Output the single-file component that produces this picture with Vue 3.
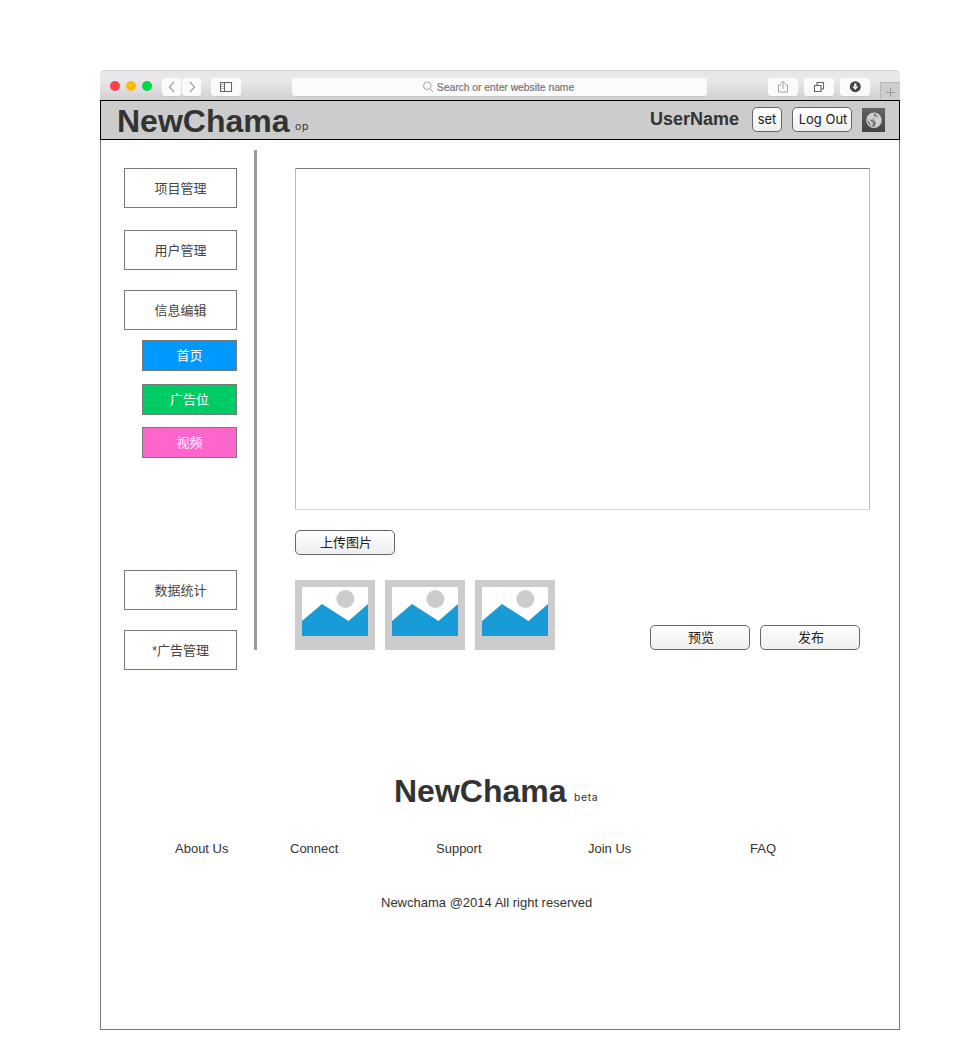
<script setup>
const mainNav = ['项目管理', '用户管理', '信息编辑']
const subNav = [
  { label: '首页', tone: 'blue' },
  { label: '广告位', tone: 'green' },
  { label: '视频', tone: 'pink' },
]
const lowerNav = ['数据统计', '*广告管理']
const footerLinks = ['About Us', 'Connect', 'Support', 'Join Us', 'FAQ']
</script>

<template>
  <div class="window">
    <div class="chrome">
      <div class="lights"><i class="red"></i><i class="yellow"></i><i class="lime"></i></div>
      <div class="nav-pair">
        <span class="tool"><svg width="19" height="18" viewBox="0 0 19 18"><path d="M12 4 7.500 9 12 14" class="soft" /></svg></span>
        <span class="tool"><svg width="19" height="18" viewBox="0 0 19 18"><path d="M8 4l4.500 5L8 14" class="soft" /></svg></span>
      </div>
      <span class="tool sidebar-toggle">
        <svg width="30" height="18" viewBox="0 0 30 18"><path d="M9.500 4.500h11v9h-11zM13.500 4.500v9" class="dark" /><path d="M10.500 6.500h2M10.500 8.500h2M10.500 10.500h2" class="soft thin" /></svg>
      </span>
      <div class="address">
        <svg width="12" height="12" viewBox="0 0 12 12"><circle cx="5.300" cy="4.800" r="3.800" class="soft thin" /><path d="M8 7.600 11 11" class="soft thin" /></svg>
        <span>Search or enter website name</span>
      </div>
      <div class="tools">
        <span class="tool"><svg width="30" height="18" viewBox="0 0 30 18"><path d="M13 7h-2.500v7h9V7H17M15 11V3.500M12.700 5.500 15 3.200l2.300 2.300" class="soft thin" /></svg></span>
        <span class="tool"><svg width="30" height="18" viewBox="0 0 30 18"><path d="M10.500 7.500h6.500v6h-6.500zM13 7.500V4.500h6.500v6.500h-2.500" class="dark" /></svg></span>
        <span class="tool"><svg width="30" height="18" viewBox="0 0 30 18"><circle cx="15.300" cy="8.700" r="5.500" fill="#444" /><path d="M15.300 5.500v3" stroke="#fff" stroke-width="2.200" /><path d="M12.300 8.500h6l-3 3.500z" fill="#fff" /></svg></span>
      </div>
      <div class="new-tab"><svg width="19" height="18" viewBox="0 0 19 18"><path d="M9.500 5v9M5 9.500h9" class="plus" /></svg></div>
    </div>

    <header class="header">
      <div class="brand">NewChama</div>
      <div class="tag op">op</div>
      <div class="user">UserName</div>
      <button class="small-btn set">set</button>
      <button class="small-btn logout">Log Out</button>
      <svg class="globe" width="23" height="24" viewBox="0 0 23 24">
        <defs><linearGradient id="globeBg" x2="0" y2="1"><stop stop-color="#646464" /><stop offset="1" stop-color="#414141" /></linearGradient></defs>
        <rect width="23" height="24" fill="url(#globeBg)" />
        <circle cx="12" cy="12.300" r="7.200" fill="#777" stroke="#ccc" stroke-width="1.300" />
        <path d="M6 8.500 8.500 6l3-1 .500 2.500 1.500 1-2 1.500-1 2-2.500-.500.500 1.500 2.500 1.500-.500 3-1.500.500-1-3-2-2.500zM14 5.500l3 1.500 2 4-.500 4-1.500 2-3 2-1.500-1 1.500-2.500-.500-2-2-1 .500-2.500 2-1.500 1.500 1 .500-1.500-2-.500z" fill="#d0d0d0" />
      </svg>
    </header>

    <div class="page">
      <div class="workspace">
        <nav class="sidebar">
          <a v-for="item in mainNav" :key="item" class="nav-box">{{ item }}</a>
          <div class="sub">
            <a v-for="item in subNav" :key="item.label" class="sub-box" :class="item.tone">{{ item.label }}</a>
          </div>
          <a v-for="item in lowerNav" :key="item" class="nav-box">{{ item }}</a>
        </nav>
        <div class="divider"></div>
        <main class="content">
          <div class="editor"></div>
          <button class="btn">上传图片</button>
          <div class="bottom-row">
            <svg v-for="n in 3" :key="n" width="80" height="70" viewBox="0 0 80 70">
              <rect width="80" height="70" fill="#ccc" />
              <rect x="7" y="7" width="66" height="49" fill="#fff" />
              <circle cx="50.400" cy="19" r="9" fill="#ccc" />
              <path d="M7 41 27 24l26.500 17L73 24v32H7z" fill="#189bd7" />
            </svg>
            <button class="btn preview">预览</button>
            <button class="btn">发布</button>
          </div>
        </main>
      </div>

      <footer class="footer">
        <div class="footer-brand">
          <div class="brand">NewChama</div>
          <div class="tag beta">beta</div>
        </div>
        <div class="links"><a v-for="link in footerLinks" :key="link">{{ link }}</a></div>
        <p>Newchama @2014 All right reserved</p>
      </footer>
    </div>
  </div>
</template>

<style>
body { background: #fff; }
</style>

<style scoped>
* { box-sizing: border-box; }
svg { display: block; flex: none; }
.window {
  width: 800px;
  height: 960px;
  margin: 70px 0 0 100px;
  display: flex;
  flex-direction: column;
  font-family: "Liberation Sans", "Noto Sans CJK SC", sans-serif;
  font-size: 13px;
  color: #333;
}
.chrome {
  height: 30px;
  display: flex;
  align-items: flex-start;
  padding: 7px 0 0 9px;
  border-top: 1px solid #d0ced0;
  border-radius: 5px 5px 0 0;
  background: linear-gradient(#e9e6e9, #ebe8eb 30%, #d2d0d2);
}
.lights { display: flex; gap: 6px; width: 53px; padding: 3px 0 0 1px; }
.lights i { width: 10px; height: 10px; border-radius: 50%; }
.red { background: #fc4144; }
.yellow { background: #fdbc09; }
.lime { background: #00d742; }
.nav-pair { display: flex; gap: 1px; width: 49px; }
.tool { height: 18px; border-radius: 3px; background: #fcfbfc; box-shadow: 0 1px 0 #c9c7c9; }
.soft { fill: none; stroke: #a5a5a5; stroke-width: 1.3; }
.plus { fill: none; stroke: #999; stroke-width: 1; }
.dark { fill: none; stroke: #666; stroke-width: 1.1; }
.thin { stroke-width: 1; }
.address {
  width: 415px;
  height: 18px;
  margin-left: 51px;
  display: flex;
  align-items: center;
  justify-content: center;
  gap: 3px;
  padding-right: 3px;
  border-radius: 3px;
  background: #fcfbfc;
  box-shadow: 0 1px 0 #c9c7c9;
  color: #757575;
  font-size: 10.3px;
  -webkit-text-stroke: 0.2px #757575;
}
.address span { white-space: nowrap; }
.tools { display: flex; gap: 6px; margin-left: 61px; }
.new-tab { width: 20px; height: 19px; margin: 4px 0 0 10px; border: 1px solid #b7b5b7; border-width: 1px 0 0 1px; background: #cfcdcf; }
.header {
  height: 40px;
  display: flex;
  align-items: flex-start;
  padding-left: 16px;
  border: 1px solid #000;
  background: #ccc;
}
.brand { width: 173px; padding-top: 2px; font-size: 32px; line-height: 37px; font-weight: bold; }
.tag { font-family: Inter, sans-serif; font-size: 10.5px; line-height: 14px; letter-spacing: 0.6px; }
.op { width: 360px; padding: 19px 0 0 5px; }
.user { width: 102px; padding: 8px 0 0; font-size: 18px; line-height: 20px; font-weight: bold; }
button { font-family: inherit; color: #222; }
.small-btn {
  height: 25px;
  margin-top: 6px;
  padding: 0;
  border: 1px solid #666;
  border-radius: 5px;
  background: linear-gradient(#fff, #f0f0f0);
  font: 13px/21px Inter, sans-serif;
  white-space: nowrap;
}
.set { width: 30px; margin-right: 10px; }
.logout { width: 60px; margin-right: 10px; padding-left: 2px; }
.globe { margin-top: 7px; }
.page { flex: 1; border: 1px solid #777; border-top: 0; }
.workspace { height: 530px; display: flex; padding-left: 23px; }
.sidebar { width: 113px; padding-top: 28px; }
.nav-box {
  height: 40px;
  display: flex;
  align-items: center;
  justify-content: center;
  padding-bottom: 2px;
  border: 1px solid #797979;
  color: #444;
}
.nav-box:nth-child(1) { margin-bottom: 22px; }
.nav-box:nth-child(2), .nav-box:nth-child(5) { margin-bottom: 20px; }
.sub { height: 240px; display: flex; flex-direction: column; gap: 13px; padding: 10px 0 0 18px; }
.sub-box {
  height: 31px;
  display: flex;
  align-items: center;
  justify-content: center;
  padding-bottom: 2px;
  border: 1px solid #797979;
  color: #fff;
}
.blue { background: #09f; }
.green { background: #0c6; }
.pink { margin-top: -1px; background: #f6c; }
.divider { width: 3px; height: 500px; margin: 10px 38px 0 17px; background: #999; }
.content { width: 575px; padding-top: 28px; }
.editor { height: 342px; margin-bottom: 20px; border: 1px solid #bbb; border-top-color: #777; border-bottom-color: #d5d5d5; }
.btn {
  display: block;
  width: 100px;
  height: 25px;
  padding: 0 0 0 2px;
  border: 1px solid #666;
  border-radius: 5px;
  background: linear-gradient(#fff, #eee);
  font-size: 13px;
  line-height: 22px;
}
.bottom-row { display: flex; align-items: flex-end; gap: 10px; margin-top: 25px; }
.preview { margin-left: 85px; }
.footer { padding-top: 101px; }
.footer-brand { display: flex; padding-left: 293px; }
.beta { padding: 20px 0 0 7px; }
.links { display: grid; grid-template-columns: 115px 146px 152px 162px auto; padding: 31px 0 0 74px; line-height: 15px; }
.footer p { margin: 39px 0 0 280px; line-height: 15px; }
</style>
